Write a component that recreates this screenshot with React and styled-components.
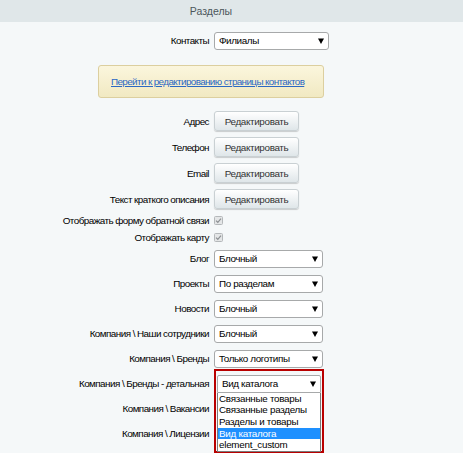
import React from "react";
import styled, { createGlobalStyle } from "styled-components";

const GlobalStyle = createGlobalStyle`
  html, body {
    margin: 0;
    padding: 0;
    background: #f5f8f9;
  }
  body {
    font-family: "Liberation Sans", Arial, sans-serif;
    color: #000;
  }
`;

const catalogOptions = [
  "Связанные товары",
  "Связанные разделы",
  "Разделы и товары",
  "Вид каталога",
  "element_custom",
];

export default function App() {
  return (
    <>
      <GlobalStyle />
      <Page>
        <Header>
          <HeaderTitle>Разделы</HeaderTitle>
        </Header>
        <Content>
          <Row h={25}>
            <Label>Контакты</Label>
            <Select wide>
              <span>Филиалы</span>
              <Arrow />
            </Select>
          </Row>

          <Notice>
            <NoticeLink href="#">Перейти к редактированию страницы контактов</NoticeLink>
          </Notice>

          <Row h={26}>
            <Label>Адрес</Label>
            <Button>Редактировать</Button>
          </Row>
          <Row h={26}>
            <Label>Телефон</Label>
            <Button>Редактировать</Button>
          </Row>
          <Row h={26}>
            <Label>Email</Label>
            <Button>Редактировать</Button>
          </Row>
          <Row h={26}>
            <Label>Текст краткого описания</Label>
            <Button>Редактировать</Button>
          </Row>

          <Row h={17}>
            <Label>Отображать форму обратной связи</Label>
            <Checkbox />
          </Row>
          <Row h={17}>
            <Label>Отображать карту</Label>
            <Checkbox />
          </Row>

          <Row h={25}>
            <Label>Блог</Label>
            <Select>
              <span>Блочный</span>
              <Arrow />
            </Select>
          </Row>
          <Row h={25}>
            <Label>Проекты</Label>
            <Select>
              <span>По разделам</span>
              <Arrow />
            </Select>
          </Row>
          <Row h={25}>
            <Label>Новости</Label>
            <Select>
              <span>Блочный</span>
              <Arrow />
            </Select>
          </Row>
          <Row h={25}>
            <Label>Компания \ Наши сотрудники</Label>
            <Select>
              <span>Блочный</span>
              <Arrow />
            </Select>
          </Row>
          <Row h={25}>
            <Label>Компания \ Бренды</Label>
            <Select>
              <span>Только логотипы</span>
              <Arrow />
            </Select>
          </Row>
          <Row h={25}>
            <Label>Компания \ Бренды - детальная</Label>
            <OpenSelectWrap>
              <HighlightFrame />
              <Select open>
                <span>Вид каталога</span>
                <Arrow />
              </Select>
              <OptionList>
                {catalogOptions.map((o) => (
                  <Option key={o} active={o === "Вид каталога"}>
                    {o}
                  </Option>
                ))}
              </OptionList>
            </OpenSelectWrap>
          </Row>
          <Row h={25}>
            <Label>Компания \ Вакансии</Label>
            <span />
          </Row>
          <Row h={25}>
            <Label>Компания \ Лицензии</Label>
            <span />
          </Row>
        </Content>
      </Page>
    </>
  );
}

function Arrow() {
  return (
    <ArrowIcon viewBox="0 0 6 6" width="6" height="6">
      <polygon points="0,0.5 6,0.5 3,6" fill="#000" />
    </ArrowIcon>
  );
}

function Checkbox() {
  return (
    <CheckBox viewBox="0 0 9 9" width="9" height="9">
      <rect x="0.5" y="0.5" width="8" height="8" rx="1" fill="#e4e6e7" stroke="#b4b8ba" />
      <polyline points="2,4.6 3.8,6.3 7,2.6" fill="none" stroke="#8c9093" strokeWidth="1.2" />
    </CheckBox>
  );
}

const Page = styled.div`
  width: 100%;
  height: 453px;
  overflow: hidden;
  background: #f5f8f9;
`;

const Header = styled.div`
  height: 22px;
  background: #e0e7e9;
  display: flex;
  align-items: center;
  justify-content: center;
  padding-right: 41px;
`;

const HeaderTitle = styled.div`
  font-size: 10.5px;
  color: #4c565b;
`;

const Content = styled.div`
  width: 422px;
  padding-top: 6px;
  display: flex;
  flex-direction: column;
`;

const Row = styled.div`
  height: ${(p) => p.h}px;
  display: grid;
  grid-template-columns: 209px 1fr;
  column-gap: 5px;
  align-items: center;
`;

const Label = styled.div`
  text-align: right;
  font-size: 9.9px;
  letter-spacing: -0.55px;
  color: #000;
  white-space: nowrap;
`;

const Select = styled.div`
  box-sizing: border-box;
  width: ${(p) => (p.wide ? 115 : p.open ? 104 : 109)}px;
  height: 18px;
  margin-left: ${(p) => (p.open ? 3 : 0)}px;
  background: #fff;
  border: 1px solid #a7a9aa;
  border-radius: ${(p) => (p.open ? "2px 2px 0 0" : "3px")};
  display: flex;
  align-items: center;
  justify-content: space-between;
  padding: 0 4px 0 4px;
  font-size: 9.9px;
  letter-spacing: -0.4px;
  color: #000;
`;

const ArrowIcon = styled.svg`
  display: block;
  flex: none;
`;

const Notice = styled.div`
  box-sizing: border-box;
  width: 226px;
  height: 33px;
  margin: 12px auto 10px;
  padding-left: 12px;
  display: flex;
  align-items: center;
  background: linear-gradient(#fbf6dd, #f1e9c2);
  border: 1px solid #dccf9f;
  border-radius: 3px;
`;

const NoticeLink = styled.a`
  font-size: 9.9px;
  letter-spacing: -0.62px;
  color: #2b68c4;
  text-decoration: underline;
  white-space: nowrap;
`;

const Button = styled.div`
  box-sizing: border-box;
  width: 85px;
  height: 20px;
  display: flex;
  align-items: center;
  justify-content: center;
  background: linear-gradient(#ffffff, #dfe6e9);
  border: 1px solid #c9d0d3;
  border-radius: 3px;
  box-shadow: 0 1px 1px rgba(0, 0, 0, 0.18);
  font-size: 9.9px;
  letter-spacing: -0.35px;
  color: #333;
`;

const CheckBox = styled.svg`
  display: block;
`;

const OpenSelectWrap = styled.div`
  position: relative;
  width: 109px;
`;

const HighlightFrame = styled.div`
  position: absolute;
  top: -6px;
  left: 0;
  width: 110px;
  height: 84px;
  box-sizing: border-box;
  border: 2.5px solid #b90000;
  pointer-events: none;
`;

const OptionList = styled.div`
  position: absolute;
  top: 18px;
  left: 3px;
  width: 104px;
  box-sizing: border-box;
  background: #fff;
  border: 1px solid #7a7a7a;
  border-top: none;
`;

const Option = styled.div`
  height: 11.7px;
  line-height: 11.7px;
  padding-left: 1px;
  font-size: 9.8px;
  letter-spacing: -0.25px;
  color: ${(p) => (p.active ? "#fff" : "#000")};
  background: ${(p) => (p.active ? "#1e90ff" : "transparent")};
  white-space: nowrap;
`;
